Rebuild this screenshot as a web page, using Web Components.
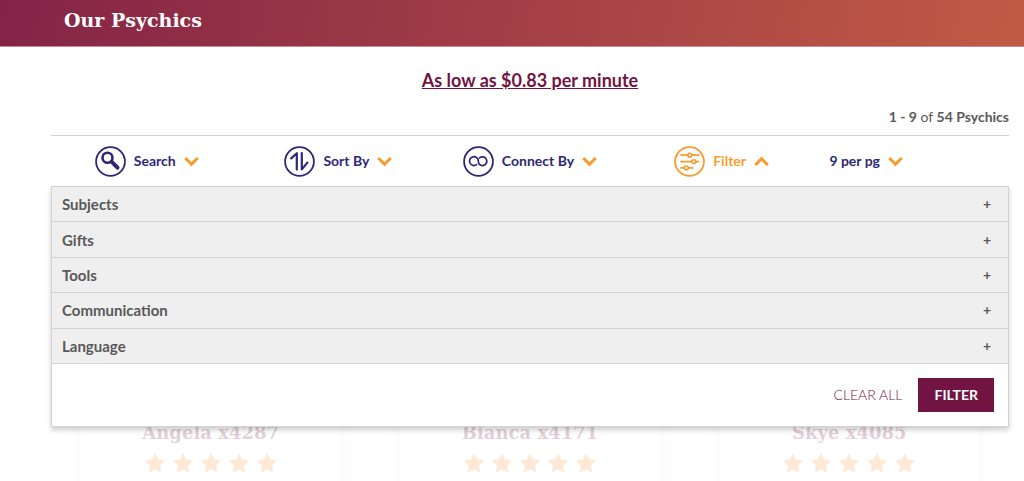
<!DOCTYPE html>
<html lang="en">
<head>
<meta charset="utf-8">
<meta name="viewport" content="width=device-width, initial-scale=1">
<title>Our Psychics</title>
<style>
  :root {
    --plum: #721442;
    --navy: #2d2777;
    --orange: #f99b2d;
    --grey: #595959;
    --line: #d3d3d3;
    --slab: "DejaVu Serif", serif;
  }
  body {
    margin: 0;
    background: #fff;
    color: var(--grey);
    font-family: Lato, "Liberation Sans", sans-serif;
    font-size: 15px;
    line-height: 20px;
  }
</style>
</head>
<body>
<psychics-page></psychics-page>

<script>
const ICONS = {
  search: `
    <circle cx="15.5" cy="15.5" r="14.4" stroke-width="1.8"/>
    <circle cx="12.5" cy="11.700" r="5" stroke-width="2.600"/>
    <path d="M16.800 15.800l5.700 5.900" stroke-width="4" stroke-linecap="round"/>`,
  sort: `
    <circle cx="15.5" cy="15.5" r="14.4" stroke-width="1.8"/>
    <path d="M7.2 12.4l5.600-5.200v16.400M17.800 7.200v16.200l5.600-6.800" stroke-width="2.2" stroke-linecap="round" stroke-linejoin="round"/>`,
  connect: `
    <circle cx="15.5" cy="15.5" r="14.4" stroke-width="1.8"/>
    <path d="M13.600 18.600a4.400 4.400 0 1 1 1.700-3.500c0 3 2 4.500 4.300 4.500a4.400 4.400 0 1 0-3.200-7.600" stroke-width="1.700" stroke-linecap="round"/>`,
  filter: `
    <circle cx="15.5" cy="15.5" r="14.4" stroke-width="1.8"/>
    <path d="M7 9.200h6.700M18 9.200h6.500M7 15.600h10.800M22 15.600h2.500M7 21.900h3.300M14.600 21.900h4.200" stroke-width="1.700" stroke-linecap="round"/>
    <circle cx="15.800" cy="9.200" r="1.900" stroke-width="1.600"/>
    <circle cx="19.900" cy="15.600" r="1.900" stroke-width="1.600"/>
    <circle cx="12.400" cy="21.900" r="1.900" stroke-width="1.600"/>`
};

const CHEVRON = `
  <svg class="chevron" width="15" height="11" viewBox="0 0 15 11" fill="none" aria-hidden="true">
    <path d="M1.300 2l6.200 6.400L13.700 2" stroke="#f99b2d" stroke-width="3"/>
  </svg>`;

class PageBanner extends HTMLElement {
  constructor() {
    super();
    this.attachShadow({ mode: 'open' });
  }

  connectedCallback() {
    this.shadowRoot.innerHTML = `
      <style>
        :host {
          display: block;
          padding: 6px 64px 12px;
          background: linear-gradient(100deg, #842347, #c15b45);
          border-bottom: 1px solid #c48a98;
        }
        h1 {
          margin: 0;
          color: #fff;
          font: bold 19px/28px var(--slab);
        }
      </style>
      <h1><slot></slot></h1>
    `;
  }
}
customElements.define('page-banner', PageBanner);

class ToolToggle extends HTMLElement {
  constructor() {
    super();
    this.attachShadow({ mode: 'open' });
  }

  connectedCallback() {
    const open = this.hasAttribute('open');
    this.shadowRoot.innerHTML = `
      <style>
        :host { display: block; }
        button {
          display: flex;
          align-items: center;
          gap: 8px;
          padding: 0;
          border: 0;
          background: none;
          color: ${open ? 'var(--orange)' : 'var(--navy)'};
          font: bold 14px/20px Lato, "Liberation Sans", sans-serif;
          cursor: pointer;
        }
        .chevron { transform: ${open ? 'rotate(180deg)' : 'none'}; }
      </style>
      <button type="button" aria-expanded="${open}">
        <svg width="31" height="31" viewBox="0 0 31 31" fill="none" stroke="currentColor" aria-hidden="true">${ICONS[this.getAttribute('icon')]}</svg>
        <slot></slot>
        ${CHEVRON}
      </button>
    `;
  }
}
customElements.define('tool-toggle', ToolToggle);

class PageSize extends HTMLElement {
  constructor() {
    super();
    this.attachShadow({ mode: 'open' });
  }

  connectedCallback() {
    this.shadowRoot.innerHTML = `
      <style>
        :host { display: block; }
        label {
          display: flex;
          align-items: center;
          gap: 8px;
        }
        select {
          appearance: none;
          field-sizing: content;
          padding: 0;
          border: 0;
          background: none;
          color: var(--navy);
          font: bold 14px/20px Lato, "Liberation Sans", sans-serif;
          cursor: pointer;
        }
      </style>
      <label>
        <select aria-label="Psychics per page">
          <option>9 per pg</option>
        </select>
        ${CHEVRON}
      </label>
    `;
  }
}
customElements.define('page-size', PageSize);

class FilterGroup extends HTMLElement {
  constructor() {
    super();
    this.attachShadow({ mode: 'open' });
  }

  connectedCallback() {
    this.shadowRoot.innerHTML = `
      <style>
        :host {
          display: grid;
          border-bottom: 1px solid var(--line);
          background: #efefef;
        }
        button {
          display: flex;
          align-items: center;
          justify-content: space-between;
          padding: 0 17px 0 10px;
          border: 0;
          background: none;
          color: var(--grey);
          font: bold 15px/20px Lato, "Liberation Sans", sans-serif;
          cursor: pointer;
        }
        .sign { font-size: 14px; }
      </style>
      <button type="button" aria-expanded="false">
        <slot></slot>
        <span class="sign">+</span>
      </button>
    `;
  }
}
customElements.define('filter-group', FilterGroup);

class FilterPanel extends HTMLElement {
  constructor() {
    super();
    this.attachShadow({ mode: 'open' });
  }

  connectedCallback() {
    this.shadowRoot.innerHTML = `
      <style>
        :host {
          display: block;
          border: 1px solid var(--line);
          background: #fff;
          box-shadow: 0 3px 5px rgba(0, 0, 0, 0.2);
        }
        .groups {
          display: grid;
          grid-auto-rows: 1fr;
          min-height: 177px;
        }
        .actions {
          display: flex;
          align-items: center;
          justify-content: flex-end;
          gap: 16px;
          padding: 14px;
        }
        button {
          padding: 0;
          border: 0;
          background: none;
          color: var(--plum);
          font: 300 14px/20px Lato, "Liberation Sans", sans-serif;
          cursor: pointer;
        }
        .apply {
          padding: 7px 16px;
          background: var(--plum);
          color: #fff;
          font-weight: bold;
        }
      </style>
      <div class="groups"><slot></slot></div>
      <div class="actions">
        <button type="button">CLEAR ALL</button>
        <button type="button" class="apply">FILTER</button>
      </div>
    `;
  }
}
customElements.define('filter-panel', FilterPanel);

class PsychicCard extends HTMLElement {
  constructor() {
    super();
    this.attachShadow({ mode: 'open' });
  }

  connectedCallback() {
    const star = `
      <svg width="20" height="20" viewBox="0 0 20 20" fill="#f79433" aria-hidden="true">
        <path d="M10 0l3.100 6.500 6.900.9-5 5 1.300 7.300L10 16.300l-6.300 3.400L5 12.400l-5-5 6.900-.9z"/>
      </svg>`;
    this.shadowRoot.innerHTML = `
      <style>
        :host {
          display: flex;
          flex-direction: column;
          justify-content: flex-end;
          align-items: center;
          gap: 6px;
          min-height: 277px;
          padding-bottom: 24px;
          box-shadow: 0 0 12px rgba(0, 0, 0, 0.12);
        }
        h2 {
          margin: 0;
          color: var(--plum);
          font: bold 18px/20px var(--slab);
        }
        .stars {
          display: flex;
          gap: 8px;
          padding-top: 4px;
        }
      </style>
      <h2><slot></slot></h2>
      <div class="stars" role="img" aria-label="5 stars">${star.repeat(5)}</div>
    `;
  }
}
customElements.define('psychic-card', PsychicCard);

class PsychicsPage extends HTMLElement {
  constructor() {
    super();
    this.attachShadow({ mode: 'open' });
  }

  connectedCallback() {
    this.shadowRoot.innerHTML = `
      <style>
        :host {
          display: block;
          height: 100vh;
          overflow: hidden;
        }
        main { padding: 0 15px 0 51px; }
        .offer {
          margin: 0;
          padding: 21px 0 15px;
          text-align: center;
        }
        .offer a {
          color: var(--plum);
          font-size: 18px;
          line-height: 24px;
          font-weight: bold;
        }
        .count {
          margin: 0;
          padding-bottom: 8px;
          text-align: right;
          font-size: 14px;
        }
        .toolbar {
          display: grid;
          grid-template-columns: repeat(5, 1fr);
          align-items: center;
          justify-items: center;
          min-height: 50px;
          border-top: 1px solid var(--line);
        }
        page-size {
          justify-self: start;
          padding-left: 12px;
        }
        .results { position: relative; }
        filter-panel {
          position: absolute;
          z-index: 1;
          top: 0;
          left: 0;
          right: 0;
        }
        .cards {
          display: grid;
          grid-template-columns: repeat(3, 1fr);
          column-gap: 60px;
          padding: 10px 30px 0;
          opacity: 0.2;
        }
      </style>
      <page-banner>Our Psychics</page-banner>
      <main>
        <p class="offer"><a href="#pricing">As low as $0.83 per minute</a></p>
        <p class="count"><b>1 - 9</b> of <b>54 Psychics</b></p>
        <div class="toolbar">
          <tool-toggle icon="search">Search</tool-toggle>
          <tool-toggle icon="sort">Sort By</tool-toggle>
          <tool-toggle icon="connect">Connect By</tool-toggle>
          <tool-toggle icon="filter" open>Filter</tool-toggle>
          <page-size></page-size>
        </div>
        <div class="results">
          <filter-panel>
            <filter-group>Subjects</filter-group>
            <filter-group>Gifts</filter-group>
            <filter-group>Tools</filter-group>
            <filter-group>Communication</filter-group>
            <filter-group>Language</filter-group>
          </filter-panel>
          <div class="cards">
            <psychic-card>Angela x4287</psychic-card>
            <psychic-card>Bianca x4171</psychic-card>
            <psychic-card>Skye x4085</psychic-card>
          </div>
        </div>
      </main>
    `;
  }
}
customElements.define('psychics-page', PsychicsPage);
</script>
</body>
</html>
